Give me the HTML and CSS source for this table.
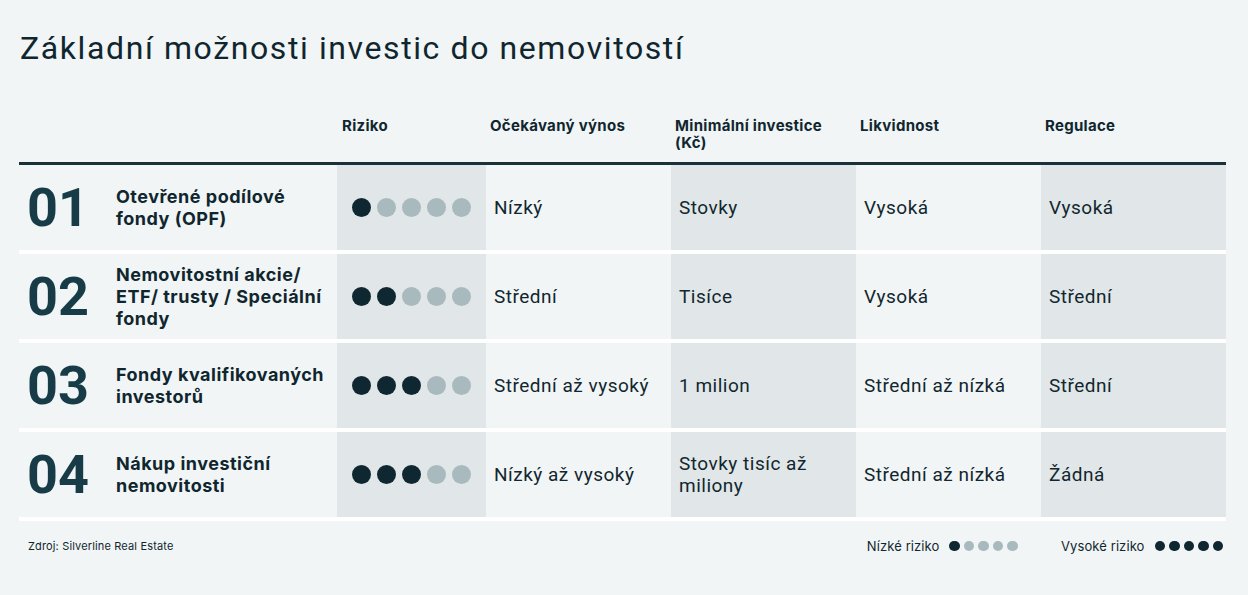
FILE: index.html
```html
<!DOCTYPE html>
<html lang="cs">
<head>
<meta charset="utf-8">
<title>Základní možnosti investic do nemovitostí</title>
<link rel="stylesheet" href="styles.css">
</head>
<body>
<div class="page">
  <h1 class="title">Základní možnosti investic do nemovitostí</h1>

  <div class="table">
    <div class="thead">
      <div class="th"></div>
      <div class="th">Riziko</div>
      <div class="th">Očekávaný výnos</div>
      <div class="th">Minimální investice<br>(Kč)</div>
      <div class="th">Likvidnost</div>
      <div class="th">Regulace</div>
    </div>

    <div class="row">
      <div class="cell first"><span class="num">01</span><span class="name">Otevřené podílové fondy (OPF)</span></div>
      <div class="cell shade risk"><span class="dot on"></span><span class="dot"></span><span class="dot"></span><span class="dot"></span><span class="dot"></span></div>
      <div class="cell">Nízký</div>
      <div class="cell shade">Stovky</div>
      <div class="cell">Vysoká</div>
      <div class="cell shade">Vysoká</div>
    </div>

    <div class="row">
      <div class="cell first"><span class="num">02</span><span class="name">Nemovitostní akcie/ ETF/ trusty / Speciální fondy</span></div>
      <div class="cell shade risk"><span class="dot on"></span><span class="dot on"></span><span class="dot"></span><span class="dot"></span><span class="dot"></span></div>
      <div class="cell">Střední</div>
      <div class="cell shade">Tisíce</div>
      <div class="cell">Vysoká</div>
      <div class="cell shade">Střední</div>
    </div>

    <div class="row">
      <div class="cell first"><span class="num">03</span><span class="name">Fondy kvalifikovaných investorů</span></div>
      <div class="cell shade risk"><span class="dot on"></span><span class="dot on"></span><span class="dot on"></span><span class="dot"></span><span class="dot"></span></div>
      <div class="cell">Střední až vysoký</div>
      <div class="cell shade">1 milion</div>
      <div class="cell">Střední až nízká</div>
      <div class="cell shade">Střední</div>
    </div>

    <div class="row">
      <div class="cell first"><span class="num">04</span><span class="name">Nákup investiční nemovitosti</span></div>
      <div class="cell shade risk"><span class="dot on"></span><span class="dot on"></span><span class="dot on"></span><span class="dot"></span><span class="dot"></span></div>
      <div class="cell">Nízký až vysoký</div>
      <div class="cell shade">Stovky tisíc až miliony</div>
      <div class="cell">Střední až nízká</div>
      <div class="cell shade">Žádná</div>
    </div>
  </div>

  <div class="footer">
    <div class="source">Zdroj: Silverline Real Estate</div>
    <div class="legend">
      <div class="legend-item">
        <span class="legend-label">Nízké riziko</span>
        <span class="mini on"></span><span class="mini"></span><span class="mini"></span><span class="mini"></span><span class="mini"></span>
      </div>
      <div class="legend-item">
        <span class="legend-label">Vysoké riziko</span>
        <span class="mini on"></span><span class="mini on"></span><span class="mini on"></span><span class="mini on"></span><span class="mini on"></span>
      </div>
    </div>
  </div>
</div>
</body>
</html>
```

FILE: styles.css
```css
* { box-sizing: border-box; }

html, body {
  margin: 0;
  padding: 0;
  background: #f1f5f6;
}

body {
  font-family: Roboto, "Liberation Sans", sans-serif;
  color: #11262e;
}

.page {
  padding: 28px 0 0 19px;
  width: 1248px;
}

.title {
  margin: 0 0 0 1px;
  font-family: Roboto, sans-serif;
  font-weight: 400;
  font-size: 32px;
  line-height: 40px;
  color: #10262e;
  letter-spacing: 1.6px;
}

.table {
  width: 1207px;
  margin-top: 49px;
}

.thead {
  display: grid;
  grid-template-columns: 318px 149px 185px 185px 185px 185px;
  border-bottom: 3px solid #1b3139;
  height: 48px;
}

.th {
  font-family: Inter, "Open Sans", sans-serif;
  font-weight: 700;
  font-size: 15px;
  line-height: 17px;
  letter-spacing: 0.3px;
  padding-left: 4px;
  color: #10262e;
}

.thead .th:nth-child(2) { padding-left: 5px; }

.row {
  display: grid;
  grid-template-columns: 318px 149px 185px 185px 185px 185px;
  height: 89px;
  border-bottom: 4px solid #ffffff;
}

.cell {
  display: flex;
  align-items: center;
  padding-left: 8px;
  font-size: 19px;
  line-height: 22px;
  letter-spacing: 0.5px;
  color: #11262e;
}

.shade { background: #e1e6e8; }

.first {
  padding-left: 8px;
  letter-spacing: 0;
}

.num {
  width: 89px;
  flex: none;
  font-family: Roboto, sans-serif;
  font-weight: 700;
  font-size: 54px;
  line-height: 54px;
  color: #173c48;
}

.name {
  font-family: Inter, "Open Sans", sans-serif;
  font-weight: 700;
  font-size: 18px;
  line-height: 22px;
  letter-spacing: 0.5px;
  color: #10262e;
  width: 216px;
}

.risk {
  padding-left: 15px;
  gap: 6px;
}

.dot {
  width: 19px;
  height: 19px;
  border-radius: 50%;
  background: #a8babd;
  flex: none;
}

.dot.on { background: #0e2730; }

.footer {
  display: flex;
  justify-content: space-between;
  align-items: center;
  width: 1207px;
  padding: 17px 3px 0 9px;
}

.source {
  font-family: Inter, sans-serif;
  font-size: 11px;
  letter-spacing: 0.15px;
  color: #10262e;
}

.legend {
  display: flex;
  gap: 43px;
}

.legend-item {
  display: flex;
  align-items: center;
  gap: 4px;
}

.legend-label {
  font-family: Inter, sans-serif;
  font-size: 13px;
  letter-spacing: 0.1px;
  margin-right: 6px;
  color: #10262e;
}

.mini {
  width: 10.5px;
  height: 10.5px;
  border-radius: 50%;
  background: #a8babd;
  flex: none;
}

.mini.on { background: #0e2730; }
```
